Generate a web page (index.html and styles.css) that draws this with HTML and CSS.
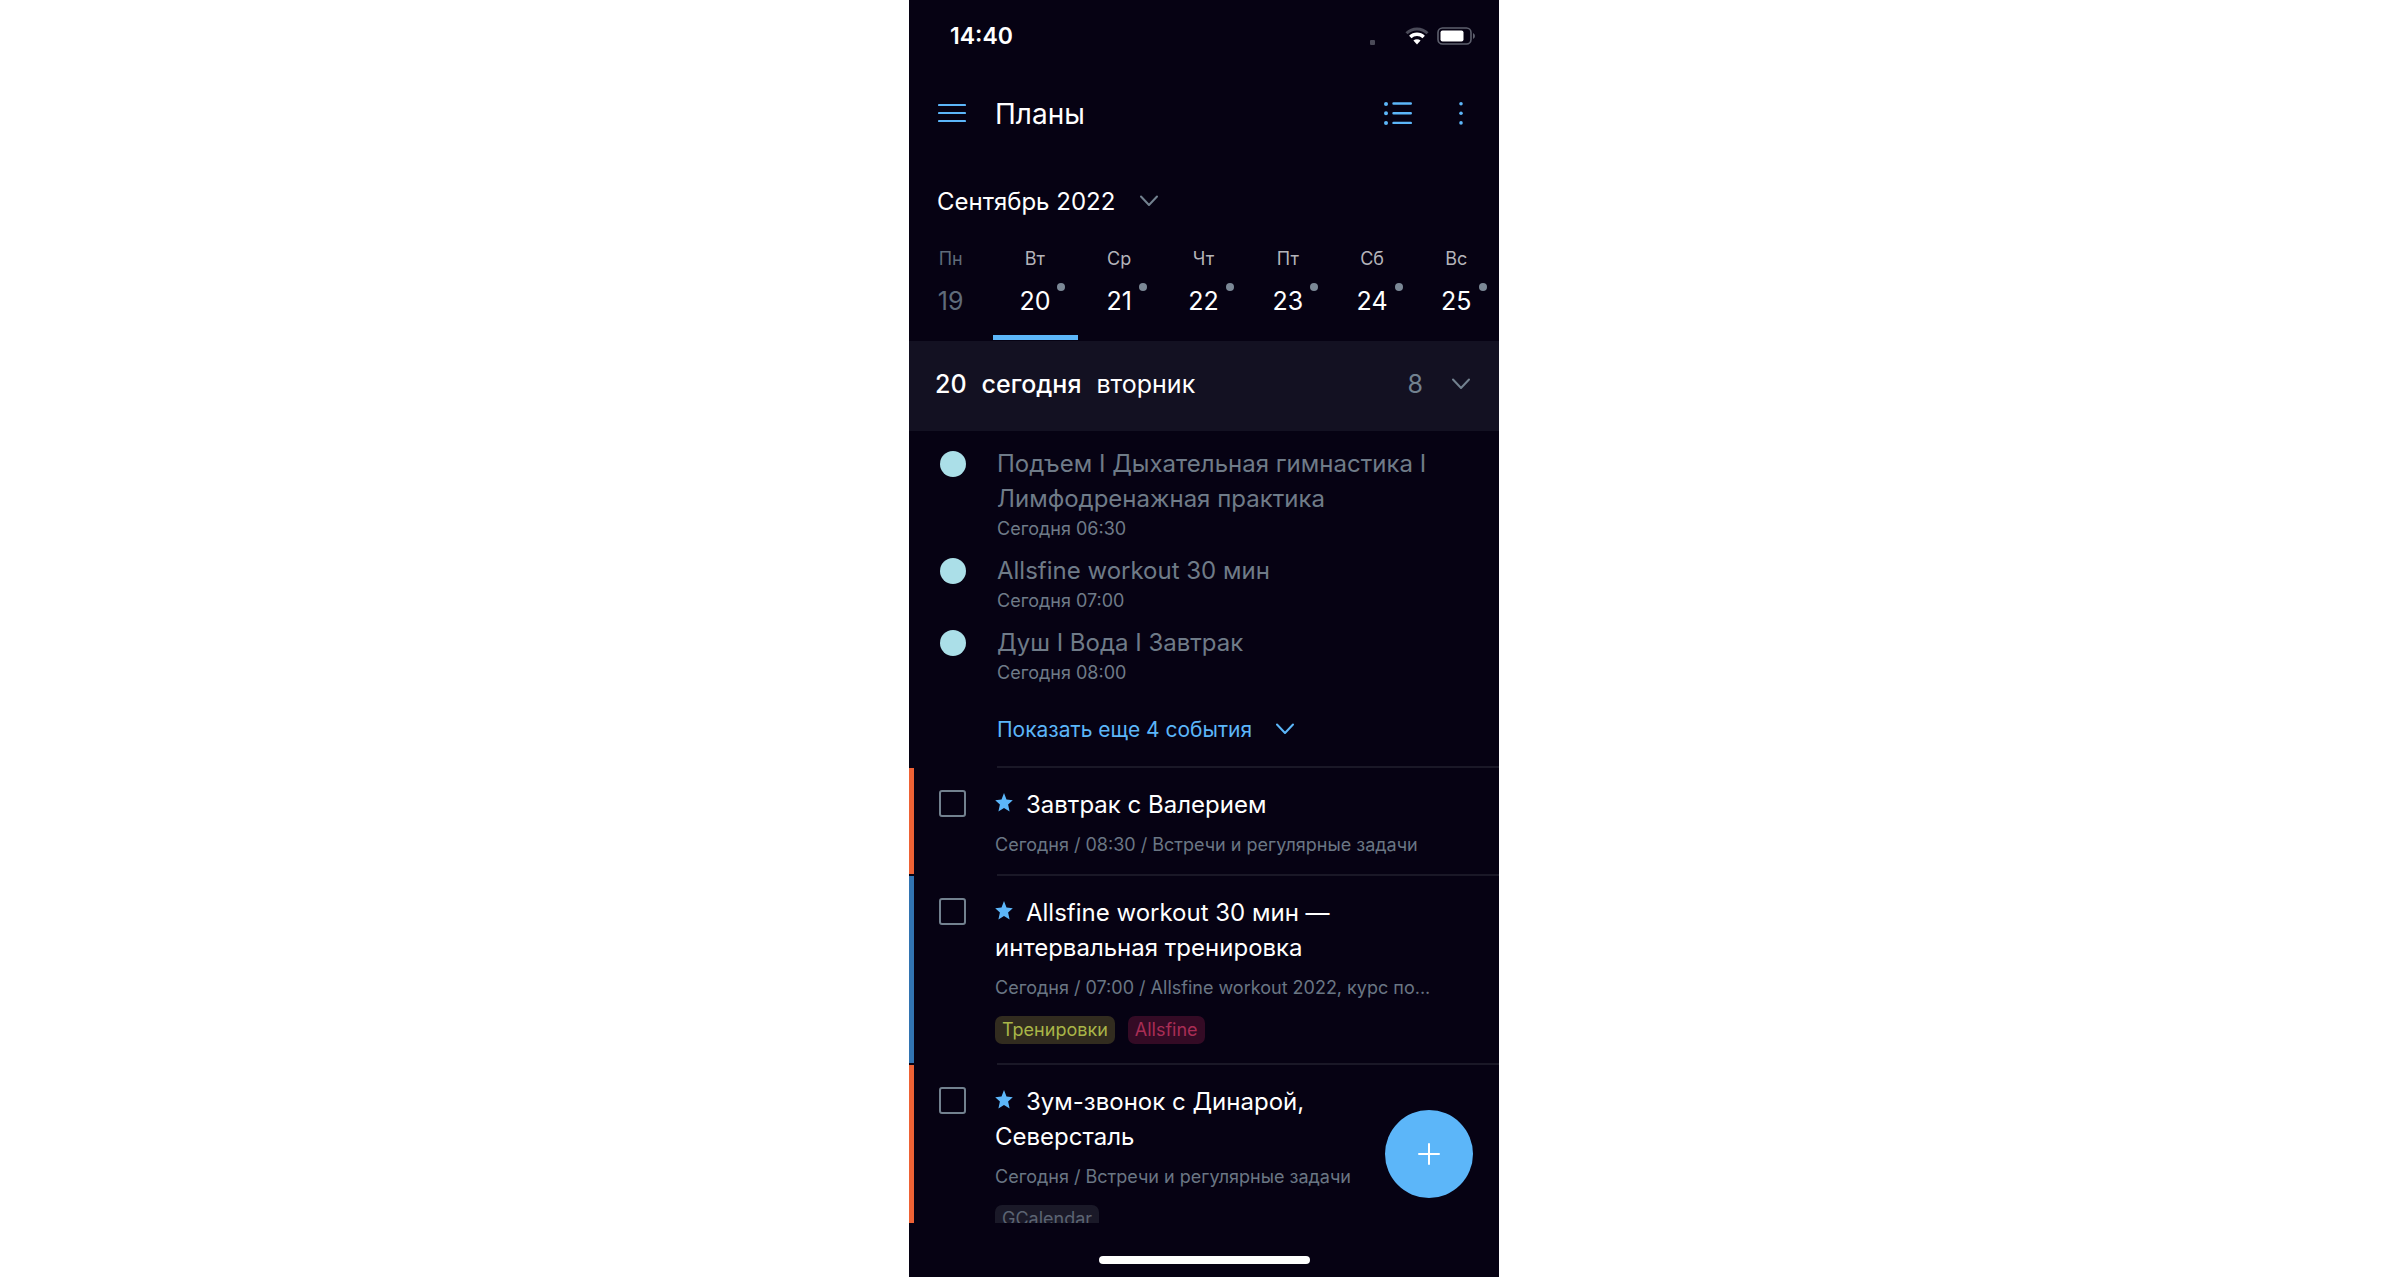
FILE: index.html
```html
<!DOCTYPE html>
<html lang="ru">
<head>
    <meta charset="UTF-8">
    <meta name="viewport" content="width=device-width, initial-scale=1.0">
    <title>Планы</title>
    <link rel="stylesheet" href="styles.css">
</head>
<body>
    <div class="phone">
        <div class="status-bar">
            <span class="time">14:40</span>
            <div class="status-icons">
                <span class="signal"></span>
                <svg class="wifi" width="24" height="18" viewBox="0 0 24 18">
                    <path d="M1.5 6.2a15 15 0 0 1 21 0" fill="none" stroke="#4a4a58" stroke-width="3"/>
                    <path d="M5.3 10a9.6 9.6 0 0 1 13.4 0" fill="none" stroke="#fff" stroke-width="3.4"/>
                    <path d="M8.4 13.6a5.2 5.2 0 0 1 7.2 0L12 17.6z" fill="#fff"/>
                </svg>
                <svg width="38" height="18" viewBox="0 0 38 18">
                    <rect x="1" y="1" width="33" height="16" rx="4.5" fill="none" stroke="#5e606e" stroke-width="1.6"/>
                    <rect x="3.5" y="3.5" width="23" height="11" rx="2" fill="#fff"/>
                    <path d="M36 6v6q2-1 2-3t-2-3z" fill="#5e606e"/>
                </svg>
            </div>
        </div>

        <header class="app-bar">
            <button class="icon-btn" aria-label="Меню">
                <svg width="28" height="24" viewBox="0 0 28 24" stroke="#5cb6f9" stroke-width="2.2" stroke-linecap="round">
                    <path d="M1 3h26M1 11h26M1 19h26"/>
                </svg>
            </button>
            <h1>Планы</h1>
            <button class="icon-btn" aria-label="Список">
                <svg width="28" height="24" viewBox="0 0 28 24" stroke="#5cb6f9" stroke-width="2.4" stroke-linecap="round">
                    <path d="M9.5 1.5h17.3M9.5 11.2h17.3M9.5 20.9h17.3"/>
                    <path d="M2 2h.01M2 11.2h.01M2 20.9h.01" stroke-width="4"/>
                </svg>
            </button>
            <button class="icon-btn more" aria-label="Ещё">
                <svg width="6" height="24" viewBox="0 0 6 24" fill="#5cb6f9">
                    <circle cx="3" cy="1.8" r="1.8"/>
                    <circle cx="3" cy="11.2" r="1.8"/>
                    <circle cx="3" cy="20.9" r="1.8"/>
                </svg>
            </button>
        </header>

        <button class="month">
            Сентябрь 2022
            <svg class="chevron" width="18" height="12" viewBox="0 0 18 12"><path d="M1 1.5l8 8.500 8-8.500"/></svg>
        </button>

        <div class="week">
            <button class="day past"><span class="name">Пн</span><span class="num">19</span></button>
            <button class="day active"><span class="name">Вт</span><span class="num dot">20</span></button>
            <button class="day"><span class="name">Ср</span><span class="num dot">21</span></button>
            <button class="day"><span class="name">Чт</span><span class="num dot">22</span></button>
            <button class="day"><span class="name">Пт</span><span class="num dot">23</span></button>
            <button class="day"><span class="name">Сб</span><span class="num dot">24</span></button>
            <button class="day"><span class="name">Вс</span><span class="num dot">25</span></button>
        </div>

        <button class="date-header">
            <b>20</b>
            <b>сегодня</b>
            <span>вторник</span>
            <span class="count">8</span>
            <svg class="chevron" width="18" height="12" viewBox="0 0 18 12"><path d="M1 1.5l8 8.500 8-8.500"/></svg>
        </button>

        <main class="list">
            <ul class="events">
                <li>
                    <p class="event-title">Подъем I Дыхательная гимнастика I Лимфодренажная практика</p>
                    <p class="event-time">Сегодня 06:30</p>
                </li>
                <li>
                    <p class="event-title">Allsfine workout 30 мин</p>
                    <p class="event-time">Сегодня 07:00</p>
                </li>
                <li>
                    <p class="event-title">Душ I Вода I Завтрак</p>
                    <p class="event-time">Сегодня 08:00</p>
                </li>
            </ul>
            <button class="show-more">
                Показать еще 4 события
                <svg class="chevron" width="18" height="12" viewBox="0 0 18 12"><path d="M1 1.5l8 8.500 8-8.500"/></svg>
            </button>

            <div class="task orange">
                <input type="checkbox" id="task1">
                <div class="task-body">
                    <label for="task1"><svg class="star" width="18" height="20" viewBox="0 0 18 20"><path d="M9 0l2.500 6.600 6.300.6-4.700 4.400 1.500 7L9 15l-5.600 3.600 1.500-7L.2 7.200l6.300-.6z"/></svg>Завтрак с Валерием</label>
                    <p class="meta">Сегодня / 08:30 / Встречи и регулярные задачи</p>
                </div>
            </div>
            <div class="task blue">
                <input type="checkbox" id="task2">
                <div class="task-body">
                    <label for="task2"><svg class="star" width="18" height="20" viewBox="0 0 18 20"><path d="M9 0l2.500 6.600 6.300.6-4.700 4.400 1.500 7L9 15l-5.600 3.600 1.500-7L.2 7.200l6.300-.6z"/></svg>Allsfine workout 30 мин — интервальная тренировка</label>
                    <p class="meta">Сегодня / 07:00 / Allsfine workout 2022, курс по...</p>
                    <div class="tags">
                        <span class="tag olive">Тренировки</span>
                        <span class="tag pink">Allsfine</span>
                    </div>
                </div>
            </div>
            <div class="task orange">
                <input type="checkbox" id="task3">
                <div class="task-body">
                    <label for="task3"><svg class="star" width="18" height="20" viewBox="0 0 18 20"><path d="M9 0l2.500 6.600 6.300.6-4.700 4.400 1.500 7L9 15l-5.600 3.600 1.500-7L.2 7.200l6.300-.6z"/></svg>Зум-звонок с Динарой, Северсталь</label>
                    <p class="meta">Сегодня / Встречи и регулярные задачи</p>
                    <div class="tags">
                        <span class="tag gray">GCalendar</span>
                    </div>
                </div>
            </div>
        </main>

        <button class="add-btn" aria-label="Добавить">
            <svg width="22" height="22" viewBox="0 0 22 22" stroke="#fff" stroke-width="2" stroke-linecap="round">
                <path d="M11 1v20M1 11h20"/>
            </svg>
        </button>

        <div class="home-bar"><span></span></div>
    </div>
</body>
</html>
```

FILE: styles.css
```css
* {
    box-sizing: border-box;
}
body {
    margin: 0;
    background: #fff;
    font-family: Inter, "Open Sans", sans-serif;
    font-size: 24px;
}
button {
    font: inherit;
    color: inherit;
    background: none;
    border: none;
    padding: 0;
    cursor: pointer;
}
p, h1, ul {
    margin: 0;
    padding: 0;
}
svg {
    display: block;
}
.phone {
    position: relative;
    display: flex;
    flex-direction: column;
    width: 100%;
    max-width: 590px;
    height: 100vh;
    margin: 0 auto;
    background: #060213;
    color: #fff;
    overflow: hidden;
}
.chevron {
    fill: none;
    stroke: #72818f;
    stroke-width: 2;
    stroke-linecap: round;
    stroke-linejoin: round;
}

/* status bar */
.status-bar {
    display: flex;
    justify-content: space-between;
    align-items: center;
    height: 72px;
    padding: 0 24px 0 41px;
}
.time {
    font-size: 23px;
    font-weight: 600;
}
.status-icons {
    display: flex;
    align-items: center;
}
.signal {
    width: 5px;
    height: 5px;
    margin: 12px 30px 0 0;
    border-radius: 1px;
    background: #4a4a58;
}
.wifi {
    margin-right: 8px;
}

/* top bar */
.app-bar {
    display: flex;
    align-items: center;
    height: 84px;
    padding: 0 35px 0 29px;
}
.app-bar h1 {
    flex: 1;
    margin-left: 29px;
    font-size: 28px;
    font-weight: 400;
}
.more {
    margin-left: 46px;
}
.month {
    display: flex;
    align-items: center;
    gap: 25px;
    height: 90px;
    padding: 0 28px;
}

/* week */
.week {
    display: grid;
    grid-template-columns: repeat(7, 1fr);
    margin: 0 0 1px;
}
.day {
    display: flex;
    flex-direction: column;
    align-items: center;
    border-bottom: 5px solid transparent;
    padding: 0 1px 19px 0;
}
.day.active {
    border-color: #5cb6f9;
}
.name {
    font-size: 18px;
    line-height: 26px;
    color: #b4b4ba;
}
.num {
    position: relative;
    margin-top: 14px;
    font-size: 25px;
    line-height: 30px;
}
.past .name, .past .num {
    color: #5f6b7a;
}
.dot::after {
    content: "";
    position: absolute;
    top: -3px;
    right: -15px;
    width: 8px;
    height: 8px;
    border-radius: 50%;
    background: #7b8896;
}

.date-header {
    display: flex;
    align-items: center;
    gap: 15px;
    height: 90px;
    padding: 0 29px 4px 26px;
    background: #131122;
    font-size: 25px;
}
.date-header b {
    font-weight: 500;
}
.count {
    margin: 0 14px 0 auto;
    color: #72818f;
}

/* list */
.list {
    flex: 1;
    min-height: 0;
    overflow: hidden;
}
.events {
    display: flex;
    flex-direction: column;
    gap: 12px;
    padding: 15px 60px 0 88px;
    list-style: none;
    color: #6f7b88;
}
.events li {
    position: relative;
}
.events li::before {
    content: "";
    position: absolute;
    left: -57px;
    top: 5px;
    width: 26px;
    height: 26px;
    border-radius: 50%;
    background: #abdfe8;
}
.event-title {
    line-height: 35px;
}
.event-time {
    font-size: 18px;
    line-height: 25px;
}
.show-more {
    display: flex;
    align-items: center;
    gap: 24px;
    height: 30px;
    margin: 29px 0 22px 88px;
    font-size: 21px;
    color: #5cb6f9;
}
.show-more .chevron {
    stroke: #5cb6f9;
}

.task {
    position: relative;
    display: flex;
    align-items: flex-start;
    padding: 2px 0 0 30px;
}
.task::before {
    content: "";
    position: absolute;
    left: 0;
    top: 2px;
    bottom: 0;
    width: 5px;
}
.task::after {
    content: "";
    position: absolute;
    left: 88px;
    right: 0;
    top: 0;
    height: 2px;
    background: #1a1827;
}
.orange::before {
    background: #ee6235;
}
.blue::before {
    background: #3274b2;
}
.task input {
    appearance: none;
    flex: none;
    width: 27px;
    height: 27px;
    margin: 22px 29px 0 0;
    border: 2px solid #72818f;
    border-radius: 3px;
}
.task-body {
    flex: 1;
    min-width: 0;
    padding: 19px 60px 16px 0;
}
.task label {
    display: block;
    line-height: 35px;
}
.star {
    display: inline-block;
    margin-right: 13px;
    fill: #5cb6f9;
}
.meta {
    margin-top: 10px;
    font-size: 18px;
    line-height: 26px;
    color: #6a7684;
    white-space: nowrap;
    overflow: hidden;
    text-overflow: ellipsis;
}
.tags {
    display: flex;
    gap: 13px;
    margin: 15px 0 3px;
}
.tag {
    padding: 0 7px;
    border-radius: 7px;
    font-size: 18px;
    line-height: 28px;
}
.olive {
    background: #322c1f;
    color: #a9b548;
}
.pink {
    background: #340b25;
    color: #a92d55;
}
.gray {
    background: #1a1928;
    color: #5c6473;
}

.add-btn {
    position: absolute;
    right: 26px;
    bottom: 79px;
    display: flex;
    align-items: center;
    justify-content: center;
    width: 88px;
    height: 88px;
    border-radius: 50%;
    background: #5cb6f9;
}
.home-bar {
    display: flex;
    justify-content: center;
    align-items: flex-end;
    height: 54px;
    padding-bottom: 13px;
}
.home-bar span {
    width: 211px;
    height: 8px;
    border-radius: 4px;
    background: #fff;
}
```
